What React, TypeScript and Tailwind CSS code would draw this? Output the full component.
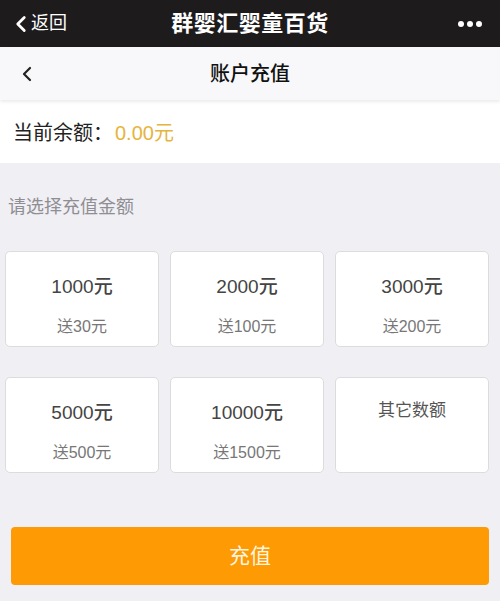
import { ChevronLeft } from "lucide-react";

const options = [
  { amount: "1000元", bonus: "送30元" },
  { amount: "2000元", bonus: "送100元" },
  { amount: "3000元", bonus: "送200元" },
  { amount: "5000元", bonus: "送500元" },
  { amount: "10000元", bonus: "送1500元" },
];

export default function App() {
  return (
    <div
      className="flex flex-col min-h-[601px] w-[500px] bg-[#f0eff4] overflow-hidden"
      style={{ fontFamily: '"Liberation Sans", "Noto Sans CJK SC", sans-serif' }}
    >
      {/* WeChat top bar */}
      <div className="relative flex items-center h-[47px] bg-[#1e1b1d] text-white">
        <div className="flex items-center pl-[8px]">
          <ChevronLeft className="w-[26px] h-[30px]" strokeWidth={2.6} />
          <span className="text-[18px] -ml-[3px]">返回</span>
        </div>
        <div className="absolute inset-0 flex items-center justify-center pointer-events-none">
          <span className="text-[22px] font-bold tracking-[0.5px]">群婴汇婴童百货</span>
        </div>
        <div className="ml-auto flex items-center gap-[3px] pr-[18px]">
          <span className="w-[6px] h-[6px] rounded-full bg-white" />
          <span className="w-[6px] h-[6px] rounded-full bg-white" />
          <span className="w-[6px] h-[6px] rounded-full bg-white" />
        </div>
      </div>

      {/* Page header */}
      <div className="relative flex items-center h-[53px] bg-[#f8f7f9] shadow-[0_2px_3px_rgba(0,0,0,0.08)] z-10">
        <ChevronLeft className="ml-[15px] w-[24px] h-[24px] text-[#222]" strokeWidth={2.2} />
        <div className="absolute inset-0 flex items-center justify-center">
          <span className="text-[20px] font-medium text-[#111]">账户充值</span>
        </div>
      </div>

      {/* Balance */}
      <div className="flex items-center h-[63px] bg-white pl-[13px] pt-[3px] text-[20px]">
        <span className="text-[#222]">当前余额：</span>
        <span className="text-[#e6b43c] ml-[2px]">0.00元</span>
      </div>

      {/* Options */}
      <div className="pt-[31px] pl-[8px] text-[18px] text-[#8e8e93]">请选择充值金额</div>

      <div className="grid grid-cols-3 gap-x-[11px] gap-y-[30px] pl-[5px] pr-[11px] mt-[30px]">
        {options.map((o) => (
          <div
            key={o.amount}
            className="flex flex-col items-center h-[96px] bg-white border border-[#dcdcdc] rounded-[5px]"
          >
            <span className="mt-[24px] text-[19px] font-medium text-[#444] leading-[22px]">{o.amount}</span>
            <span className="mt-[19px] text-[16px] text-[#777] leading-[20px]">{o.bonus}</span>
          </div>
        ))}
        <div className="flex flex-col items-center h-[96px] bg-white border border-[#dcdcdc] rounded-[5px]">
          <span className="mt-[22px] text-[17px] text-[#555] leading-[22px]">其它数额</span>
        </div>
      </div>

      {/* Submit */}
      <div className="pl-[11px] pr-[11px] mt-[54px]">
        <button className="w-full h-[58px] rounded-[4px] bg-[#fd9a04] text-[#fff5e0] text-[21px]">
          充值
        </button>
      </div>
    </div>
  );
}
